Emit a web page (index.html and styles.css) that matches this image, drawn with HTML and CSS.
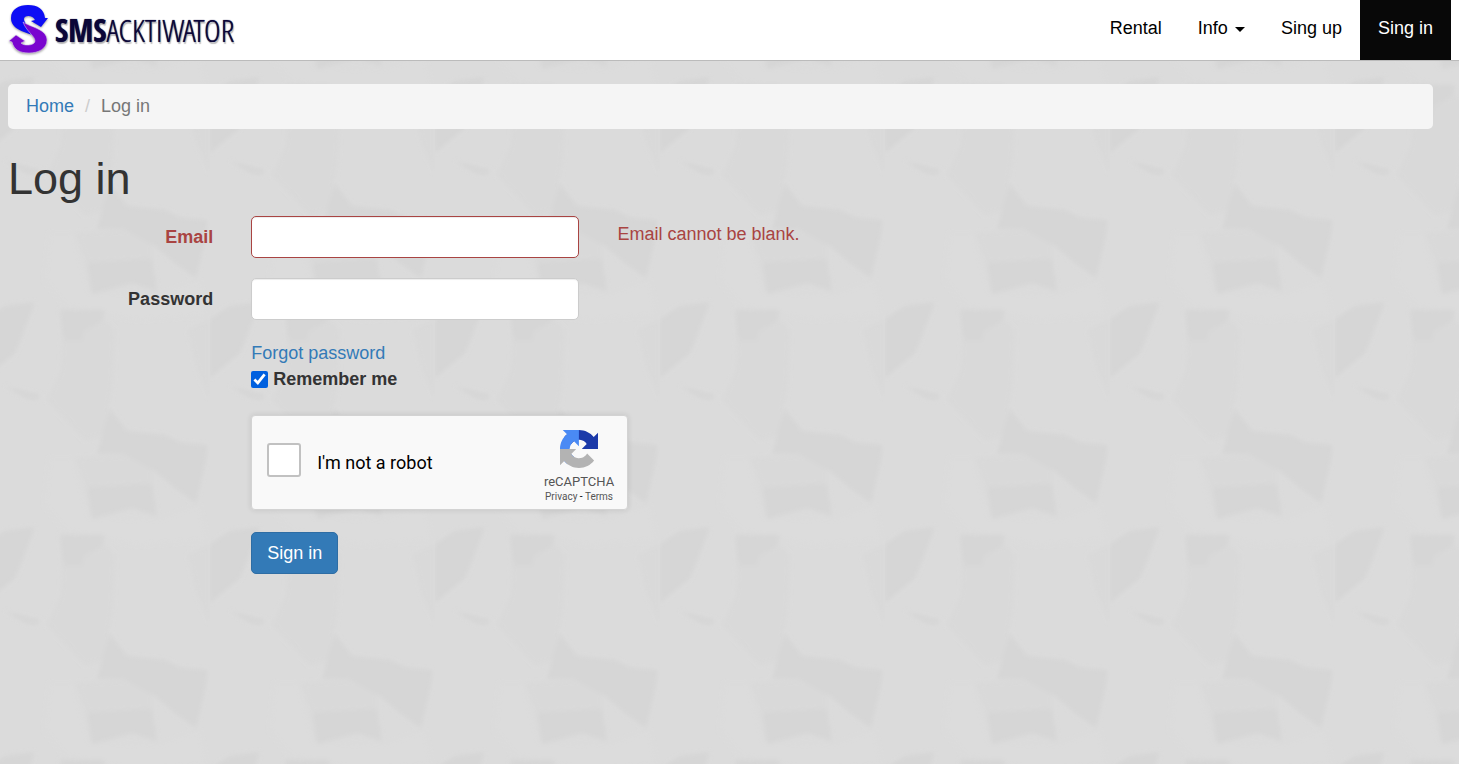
FILE: index.html
```html
<!DOCTYPE html>
<html lang="en">
<head>
    <meta charset="UTF-8">
    <meta name="viewport" content="width=device-width, initial-scale=1.0">
    <title>Log in</title>
    <link rel="stylesheet" href="styles.css">
</head>
<body>
    <nav class="navbar">
        <a class="brand" href="#">
            <svg class="brand-icon" width="42" height="52" viewBox="0 0 42 52" aria-hidden="true">
                <path fill="#0d0df5" d="M27 32C18 28 3 26 3 14C3 5 11 1 20 1C30 1 36 5 37 14L40 14L33 23L23 17L27 16C25 11 16 11 16 15C16 20 22 22 27 32Z"/>
                <path class="brand-lower" d="M15 18C22 23 39 25 39 36C39 45 30 49 21 49C12 49 6 46 4 38L1 37L8 31L17 37L13 39C15 42 27 42 27 37C27 32 18 27 15 18Z"/>
            </svg>
            <span class="brand-text"><b>SMS</b>ACKTIWATOR</span>
        </a>
        <ul class="nav">
            <li><a href="#">Rental</a></li>
            <li><a href="#">Info <span class="caret"></span></a></li>
            <li><a href="#">Sing up</a></li>
            <li><a class="active" href="#">Sing in</a></li>
        </ul>
    </nav>

    <div class="container">
        <ul class="breadcrumb">
            <li><a href="#">Home</a></li>
            <li>Log in</li>
        </ul>

        <h1>Log in</h1>

        <form class="login-form">
            <div class="form-group has-error">
                <label class="control-label" for="email">Email</label>
                <div class="field"><input class="form-control" type="text" id="email" name="email"></div>
                <p class="help-block">Email cannot be blank.</p>
            </div>
            <div class="form-group">
                <label class="control-label" for="password">Password</label>
                <div class="field"><input class="form-control" type="password" id="password" name="password"></div>
            </div>
            <div class="form-group">
                <div class="options">
                    <a href="#">Forgot password</a>
                    <div class="remember">
                        <input type="checkbox" id="remember" name="remember" checked>
                        <label for="remember">Remember me</label>
                    </div>

                    <div class="captcha">
                        <input class="captcha-box" type="checkbox" id="robot">
                        <label class="captcha-label" for="robot">I'm not a robot</label>
                        <div class="captcha-brand">
                            <svg width="38" height="38" viewBox="0 0 64 64" aria-hidden="true">
                                <path fill="#1c3aa9" d="M64 31.955l-.033-1.37V4.687l-7.16 7.16C50.948 4.674 42.033.093 32.05.093c-10.4 0-19.622 4.96-25.458 12.64l11.736 11.86a15.55 15.55 0 0 1 4.754-5.334c2.05-1.6 4.952-2.906 8.968-2.906.485 0 .86.057 1.135.163 4.976.393 9.288 3.14 11.828 7.124l-8.307 8.307L64 31.953"/>
                                <path fill="#4a8af4" d="M31.862.094l-1.37.033H4.594l7.16 7.16C4.58 13.147 0 22.06 0 32.046c0 10.4 4.96 19.622 12.64 25.458L24.5 45.768a15.55 15.55 0 0 1-5.334-4.754c-1.6-2.05-2.906-4.952-2.906-8.968 0-.485.057-.86.163-1.135.393-4.976 3.14-9.288 7.124-11.828l8.307 8.307L31.86.095"/>
                                <path fill="#b3b3b3" d="M.001 32.045l.033 1.37v25.898l7.16-7.16c5.86 7.173 14.774 11.754 24.76 11.754 10.4 0 19.622-4.96 25.458-12.64l-11.736-11.86a15.55 15.55 0 0 1-4.754 5.334c-2.05 1.6-4.952 2.906-8.968 2.906-.485 0-.86-.057-1.135-.163-4.976-.393-9.288-3.14-11.828-7.124l8.307-8.307c-10.522.04-22.4.066-27.295-.005"/>
                            </svg>
                            <span class="captcha-name">reCAPTCHA</span>
                            <span class="captcha-links"><a href="#">Privacy</a> - <a href="#">Terms</a></span>
                        </div>
                    </div>

                    <button class="btn" type="button">Sign in</button>
                </div>
            </div>
        </form>
    </div>
</body>
</html>
```
FILE: styles.css
```css
* {
    box-sizing: border-box;
}
body {
    margin: 0;
    min-height: 100vh;
    font-family: "Liberation Sans", Arial, sans-serif;
    font-size: 18px;
    line-height: 26px;
    color: #333;
    background-color: #dbdbdb;
    /* faceted paper texture, 225px tile */
    background-image: url("data:image/svg+xml,%3Csvg xmlns='http://www.w3.org/2000/svg' xmlns:xlink='http://www.w3.org/1999/xlink' width='225' height='225'%3E%3Cdefs%3E%3Cfilter id='b'%3E%3CfeGaussianBlur stdDeviation='2'/%3E%3C/filter%3E%3Cpath id='e' d='M125-36L142-14L180-10L197-2L223 0L220 19L211 58L190 43L170 26L140 9L112 9Z'/%3E%3C/defs%3E%3Cg filter='url(%23b)'%3E%3Cpath fill='%23dcdcdc' d='M65 13L88 13L104 73L175 75L214 60L222 95L150 100L80 85L60 60Z'/%3E%3Cpath fill='%23d9d9d9' d='M77 120L120 100L130 110L128 162L120 215L100 220L62 180L76 150ZM90 13L167 9L167 39L102 43ZM203 110L225 100L225 178L212 150Z'/%3E%3Cpath fill='%23d6d6d6' d='M102 43L167 39L172 71L147 63L107 74ZM0 99L20 86L50 82L37 116L30 133L0 158ZM75 90L120 90L117 101L98 111L97 120L78 120ZM20 166L55 175L52 180L40 178Z'/%3E%3Cg fill='%23d6d6d6'%3E%3Cuse xlink:href='%23e'/%3E%3Cuse xlink:href='%23e' y='225'/%3E%3C/g%3E%3C/g%3E%3C/svg%3E");
    background-position: -15px -5px;
}
a {
    color: #337ab7;
    text-decoration: none;
}
ul {
    margin: 0;
    padding: 0;
    list-style: none;
}

/* Navbar */
.navbar {
    display: flex;
    justify-content: space-between;
    height: 61px;
    padding: 0 8px;
    background-color: #fff;
    border-bottom: 1px solid #bbb;
}
.brand {
    display: flex;
    align-items: center;
    gap: 5px;
    color: #0b0638;
}
.brand-icon {
    filter: drop-shadow(0 1px 1px #999);
}
.brand-lower {
    fill: #7a05cf;
    stroke: #e4d8f5;
    stroke-width: 0.5px;
}
.brand-text {
    font-family: "Open Sans Condensed Light", "Roboto Condensed", "Open Sans Condensed", Lato, sans-serif;
    font-size: 32px;
    font-weight: 300;
    text-shadow: 0 0 1px #0b0638, 1px 2px 1px #bbb;
}
.brand-text b {
    font-family: "Open Sans Condensed", "Open Sans", sans-serif;
    font-weight: bold;
}
.nav {
    display: flex;
}
.nav a {
    display: block;
    height: 60px;
    padding: 15px 18px;
    color: #000;
}
.nav .active {
    color: #fff;
    background-color: #080808;
}
.caret {
    display: inline-block;
    margin-left: 2px;
    vertical-align: middle;
    border-top: 5px solid;
    border-right: 5px solid transparent;
    border-left: 5px solid transparent;
}

/* Page */
.container {
    padding: 23px 26px 0 8px;
}
.breadcrumb {
    display: flex;
    padding: 9px 18px 10px;
    background-color: #f5f5f5;
    border-radius: 5px;
    color: #777;
}
.breadcrumb li + li::before {
    content: "/";
    padding: 0 11px;
    color: #ccc;
}
h1 {
    margin: 25px 0 13px;
    font-size: 45px;
    font-weight: 500;
    line-height: 49px;
}

/* Login form */
.login-form {
    margin: 0 -20px;
}
.form-group {
    display: grid;
    grid-template-columns: 2fr 3fr 7fr;
    margin-bottom: 20px;
}
.control-label {
    padding: 8px 19px 0;
    text-align: right;
    font-weight: bold;
}
.field {
    padding: 0 19px;
}
.form-control {
    display: block;
    width: 100%;
    height: 42px;
    padding: 7px 15px;
    font: inherit;
    color: #555;
    background-color: #fff;
    border: 1px solid #ccc;
    border-radius: 5px;
    box-shadow: inset 0 1px 1px rgba(0, 0, 0, 0.075);
}
.help-block {
    margin: 5px 0 0;
    padding: 0 19px;
}
.has-error {
    color: #a94442;
}
.has-error .form-control {
    border-color: #a94442;
}
.options {
    grid-column: 2 / 4;
    padding: 0 19px;
}
.remember {
    display: flex;
    align-items: center;
    gap: 5px;
    font-weight: bold;
}
.remember input {
    width: 17px;
    height: 17px;
    margin: 0;
    accent-color: #0060df;
}

/* Captcha */
.captcha {
    display: flex;
    align-items: center;
    width: 377px;
    height: 95px;
    margin: 23px 0 22px;
    padding: 0 13px 0 15px;
    font-family: Roboto, sans-serif;
    color: #000;
    background-color: #f9f9f9;
    border: 1px solid #d3d3d3;
    border-radius: 4px;
    box-shadow: 0 0 5px 1px rgba(0, 0, 0, 0.08);
}
.captcha-box {
    appearance: none;
    width: 34px;
    height: 34px;
    margin: 0 16px 5px 0;
    background-color: #fff;
    border: 2px solid #c1c1c1;
    border-radius: 3px;
}
.captcha-brand {
    display: flex;
    flex-direction: column;
    align-items: center;
    margin-left: auto;
    padding-top: 8px;
}
.captcha-name {
    margin-top: 6px;
    font-size: 13px;
    line-height: 16px;
    color: #555;
}
.captcha-links {
    font-size: 10px;
    line-height: 14px;
}
.captcha-links a {
    color: #555;
}

.btn {
    display: block;
    height: 42px;
    padding: 0 15px;
    font: inherit;
    color: #fff;
    background-color: #337ab7;
    border: 1px solid #2e6da4;
    border-radius: 5px;
    cursor: pointer;
}
```
